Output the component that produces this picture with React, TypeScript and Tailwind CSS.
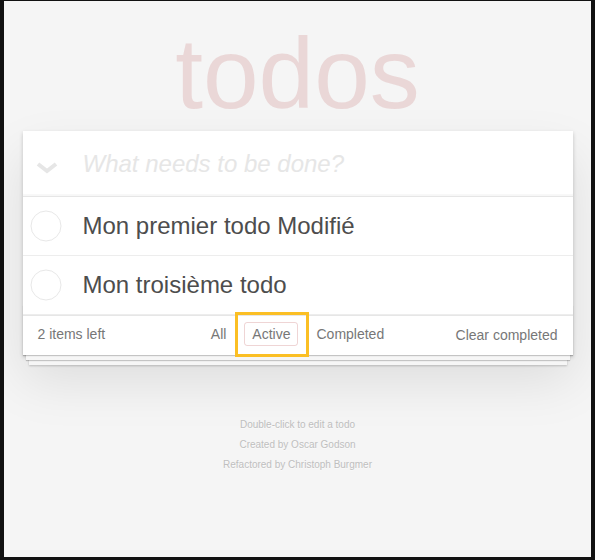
export default function App() {
  const todos = ["Mon premier todo Modifié", "Mon troisième todo"];

  return (
    <div className="h-[560px] w-[595px] overflow-hidden bg-[#f5f5f5] border-[#111] border-t border-l-4 border-r-4 border-b-[3px] font-['Liberation_Sans',Arial,sans-serif] text-[#4d4d4d]">
      <div className="mx-auto w-[550px]">
        <h1 className="mt-[15px] text-center text-[100px] leading-[115px] font-thin text-[rgba(175,47,47,0.15)]">
          todos
        </h1>

        <section className="relative bg-white shadow-[0_2px_4px_0_rgba(0,0,0,0.2),0_25px_50px_0_rgba(0,0,0,0.1)]">
          <header className="flex h-[65px] items-center shadow-[inset_0_-2px_1px_rgba(0,0,0,0.03)]">
            <span className="flex w-[60px] justify-start pl-[13px] pt-2">
              <svg width="22" height="12" viewBox="0 0 22 12" fill="none">
                <polyline points="2,2 11,9 20,2" stroke="#e6e6e6" strokeWidth="4" />
              </svg>
            </span>
            <input
              className="flex-1 bg-transparent pr-4 text-[24px] italic font-light outline-none placeholder:text-[#e6e6e6]"
              placeholder="What needs to be done?"
            />
          </header>

          <ul className="border-t border-[#e6e6e6]">
            {todos.map((t) => (
              <li key={t} className="flex items-center border-b border-[#ededed]">
                <span className="flex w-[60px] pl-[7px]">
                  <svg width="32" height="32" viewBox="0 0 32 32">
                    <circle cx="16" cy="16" r="15" fill="none" stroke="#e8e8e8" strokeWidth="1" />
                  </svg>
                </span>
                <label className="block py-[15px] pr-[15px] text-[24px] leading-[28px]">{t}</label>
              </li>
            ))}
          </ul>

          <footer className="relative flex h-[40px] items-start justify-between border-t border-[#e6e6e6] px-[15px] pt-[10px] text-[14px] leading-[16px] text-[#777]">
            <div className="pointer-events-none absolute inset-x-0 bottom-0 h-[50px] shadow-[0_1px_1px_rgba(0,0,0,0.2),0_8px_0_-3px_#f6f6f6,0_9px_1px_-3px_rgba(0,0,0,0.2),0_16px_0_-6px_#f6f6f6,0_17px_2px_-6px_rgba(0,0,0,0.2)]" />
            <span className="relative">2 items left</span>
            <ul className="absolute inset-x-0 top-[6px] flex justify-center gap-[4px]">
              <li>
                <a className="mx-[3px] block rounded-[3px] border border-transparent px-[7px] py-[3px]">All</a>
              </li>
              <li className="relative">
                <a className="mx-[3px] block rounded-[3px] border border-[rgba(175,47,47,0.2)] px-[7px] py-[3px]">Active</a>
                <span className="absolute -left-[6px] -right-[8px] -top-[10px] -bottom-[11px] border-[3px] border-[#fbbf24]" />
              </li>
              <li>
                <a className="mx-[3px] block rounded-[3px] border border-transparent px-[7px] py-[3px]">Completed</a>
              </li>
            </ul>
            <button className="relative mt-px leading-[16px]">Clear completed</button>
          </footer>
        </section>

        <footer className="mt-[65px] flex flex-col items-center gap-[10px] text-[10px] leading-none text-[#bfbfbf] [text-shadow:0_1px_0_rgba(255,255,255,0.5)]">
          <p>Double-click to edit a todo</p>
          <p>Created by Oscar Godson</p>
          <p>Refactored by Christoph Burgmer</p>
        </footer>
      </div>
    </div>
  );
}
